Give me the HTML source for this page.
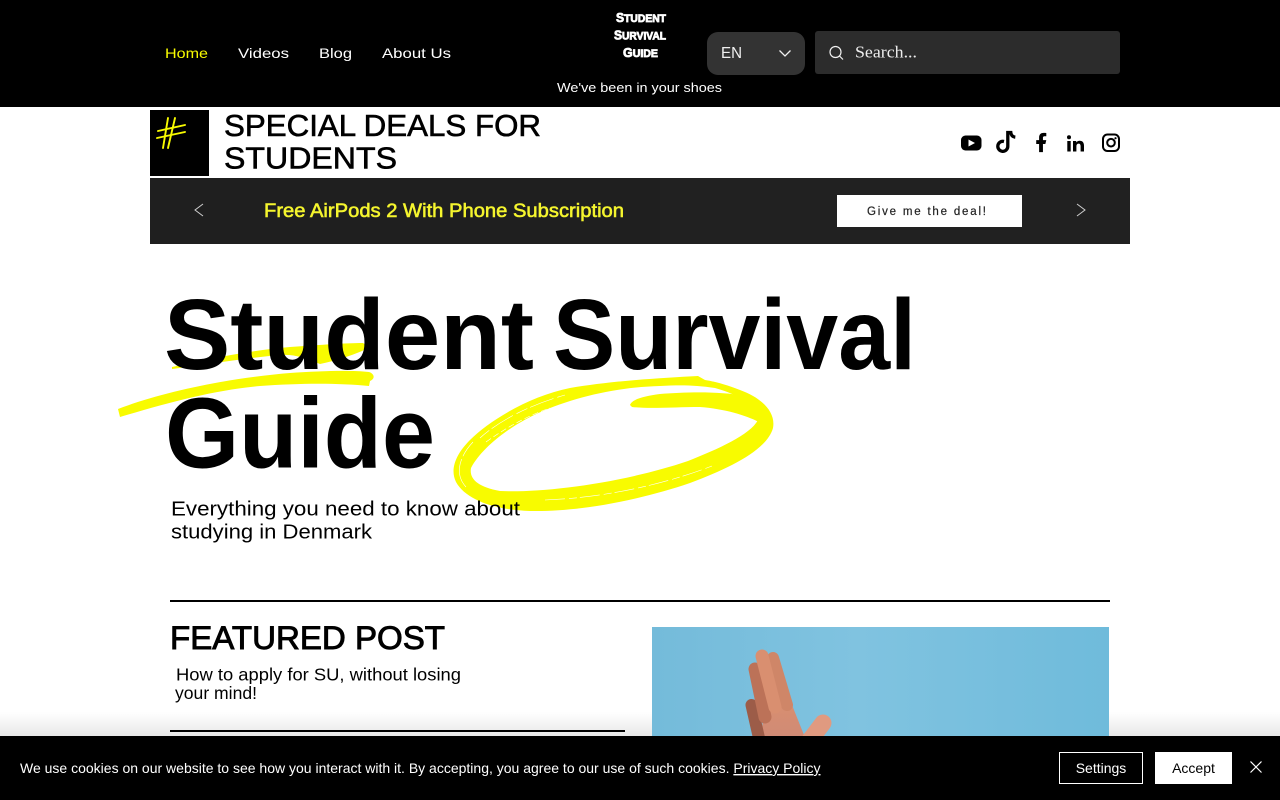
<!DOCTYPE html>
<html lang="en"><head><meta charset="utf-8"><title>Student Survival Guide</title>
<style>
html,body{margin:0;padding:0;width:1280px;height:800px;overflow:hidden;background:#fff}
svg{display:block;position:absolute;left:0;top:0}
text{font-family:"Liberation Sans",sans-serif}
.n{fill:#fff;font-size:14px}
</style></head><body>
<svg width="1280" height="800" viewBox="0 0 1280 800" xmlns="http://www.w3.org/2000/svg">
<defs>
<linearGradient id="sky" x1="0" y1="0" x2="1" y2="0"><stop offset="0" stop-color="#74bbda"/><stop offset=".45" stop-color="#80c3e0"/><stop offset="1" stop-color="#6fbbdb"/></linearGradient>
<linearGradient id="sh" x1="0" y1="0" x2="0" y2="1"><stop offset="0" stop-color="#000" stop-opacity="0"/><stop offset="1" stop-color="#000" stop-opacity=".09"/></linearGradient>
<linearGradient id="skin" x1="0" y1="0" x2="0" y2="1"><stop offset="0" stop-color="#d98f70"/><stop offset="1" stop-color="#cf8a76"/></linearGradient>
</defs>
<rect width="1280" height="800" fill="#fff"/>
<rect x="0" y="712" width="1280" height="24" fill="url(#sh)"/>
<!-- header -->
<rect width="1280" height="107" fill="#000"/>
<text class="n" x="165" y="58" textLength="43" lengthAdjust="spacingAndGlyphs" style="fill:#f8fb00">Home</text>
<text class="n" x="238" y="58" textLength="51" lengthAdjust="spacingAndGlyphs">Videos</text>
<text class="n" x="319" y="58" textLength="33" lengthAdjust="spacingAndGlyphs">Blog</text>
<text class="n" x="382" y="58" textLength="69" lengthAdjust="spacingAndGlyphs">About Us</text>
<g fill="#fff" stroke="#fff" stroke-width=".8" font-weight="700" font-size="11">
<text x="616" y="22" textLength="50" lengthAdjust="spacingAndGlyphs"><tspan font-size="13">S</tspan>TUDENT</text>
<text x="614" y="39.500" textLength="52" lengthAdjust="spacingAndGlyphs"><tspan font-size="13">S</tspan>URVIVAL</text>
<text x="623" y="57" textLength="35" lengthAdjust="spacingAndGlyphs"><tspan font-size="13">G</tspan>UIDE</text>
</g>
<text x="557" y="92" font-size="13" fill="#fff" textLength="165" lengthAdjust="spacingAndGlyphs">We've been in your shoes</text>
<rect x="707" y="32" width="98" height="43" rx="11" fill="#333"/>
<text x="721" y="58" font-size="16" fill="#f0f0f0" textLength="21" lengthAdjust="spacingAndGlyphs">EN</text>
<path d="M779.500 50.500L785 56L790.500 50.500" fill="none" stroke="#f0f0f0" stroke-width="1.300"/>
<rect x="815" y="31" width="305" height="43" rx="3" fill="#2c2c2c"/>
<circle cx="835.500" cy="52" r="5.500" fill="none" stroke="#f0f0f0" stroke-width="1.200"/>
<path d="M839.500 56L843 59.500" stroke="#f0f0f0" stroke-width="1.200"/>
<text x="855" y="57.500" font-size="17" fill="#eee" style='font-family:"Liberation Serif",serif' textLength="62" lengthAdjust="spacingAndGlyphs">Search...</text>

<!-- deals row -->
<rect x="150" y="110" width="59" height="66" fill="#000"/>
<g stroke="#f8fb00" stroke-linecap="round" fill="none" stroke-width="1.900">
<path d="M158 131L185 125"/><path d="M157 138L185 132"/>
<path d="M168 118L163 148"/><path d="M175 118L168 148"/>
</g>
<g font-size="30.500" fill="#000" stroke="#000" stroke-width=".6">
<text x="224" y="136" textLength="317" lengthAdjust="spacingAndGlyphs">SPECIAL DEALS FOR</text>
<text x="224" y="168.500" textLength="173" lengthAdjust="spacingAndGlyphs">STUDENTS</text>
</g>
<!-- socials -->
<rect x="961" y="135.500" width="20.500" height="15" rx="4.500" fill="#000"/><path d="M968.500 139.500V146.500L975 143Z" fill="#fff"/>
<g transform="translate(1.500 0)"><path d="M1002.500 141.500a5 5 0 1 0 3.800 4.900V132.500h3c.3 2.800 1.900 4.400 4.500 4.700" fill="none" stroke="#000" stroke-width="3.300"/></g>
<path transform="translate(1029.500 131) scale(.96)" d="M14 13.500h2.500l1-4H14v-2c0-1.030 0-2 2-2h1.500V2.140c-.326-.043-1.557-.14-2.857-.14C11.928 2 10 3.657 10 6.700v2.800H7v4h3V22h4z" fill="#000"/>
<g fill="#000"><circle cx="1069" cy="137.300" r="2"/><rect x="1067.300" y="141" width="3.400" height="10.500"/><path d="M1073 141h3.200v1.500c.8-1.200 2-1.800 3.500-1.800 3 0 4.300 2 4.300 5v5.800h-3.400v-5.300c0-1.600-.6-2.600-1.900-2.600-1.500 0-2.300 1-2.300 2.700v5.200H1073z"/></g>
<rect x="1103" y="134.500" width="16" height="16.500" rx="4.500" fill="none" stroke="#000" stroke-width="2"/><circle cx="1111" cy="142.700" r="3.800" fill="none" stroke="#000" stroke-width="2"/><circle cx="1115.500" cy="138.200" r="1.100" fill="#000"/>

<!-- banner -->
<rect x="150" y="178" width="980" height="66" fill="#212121"/>
<rect x="150" y="178" width="510" height="66" fill="#1f1f1f"/>
<path d="M203 204L195 210L203 216M1077 204L1085 210L1077 216" fill="none" stroke="#cfcfcf" stroke-width="1"/>
<text x="264" y="217" font-size="19" fill="#f5f52e" stroke="#f5f52e" stroke-width=".55" textLength="360" lengthAdjust="spacingAndGlyphs">Free AirPods 2 With Phone Subscription</text>
<rect x="837" y="195" width="185" height="32" fill="#fff"/>
<text x="867" y="215" font-size="11.500" fill="#222" stroke="#222" stroke-width=".2" textLength="119">Give me the deal!</text>

<!-- yellow strokes -->
<g fill="#f8fb00">
<path d="M118 409C165 391 230 378 290 373C320 371 350 370 369 372C375 374 375 379 370 381L369 386C340 383 300 383 260 386C215 390 170 402 120 417Z"/>
<path d="M172 367C205 360 245 351 290 347C320 345 345 343 363 343C367 345 366 349 362 351C350 356 335 361 320 364C305 358 295 354 280 355C245 358 205 365 172 369Z"/>
<path fill-rule="evenodd" d="M698 376C660 378 610 381 570 388C530 396 490 420 470 440C455 455 450 470 456 482C466 500 495 510 530 511C580 512 640 500 690 483C730 468 767 450 773 428C776 412 762 398 740 390C725 384 712 381 705 380ZM660 386C620 387 578 396 543 411C512 424 482 447 471 468C469 479 478 487 500 491C540 493 620 484 688 461C718 449 750 435 758 420C755 405 740 395 715 388C695 385 680 385 660 386Z"/>
<path d="M630 405C632 399 645 396 660 394C685 392 720 391 745 396C755 402 760 412 759 422C745 415 725 409 700 407C675 407 650 409 632 407Z"/>
</g>
<g fill="none" stroke="#fff" stroke-width=".6">
<path d="M466 487C455 475 458 458 473 442" stroke-dasharray="30 3"/>
<path d="M480 438C500 420 530 405 565 395" stroke-dasharray="12 3 25 4"/>
<path d="M486 442C510 425 530 415 550 408" stroke-dasharray="6 3"/>
<path d="M545 500C600 498 660 486 712 466" stroke-dasharray="20 4 8 3"/>
</g>

<!-- hero -->
<g font-weight="700" font-size="100" fill="#000">
<text x="164" y="369" textLength="370" lengthAdjust="spacingAndGlyphs">Student</text>
<text x="553" y="369" textLength="363" lengthAdjust="spacingAndGlyphs">Survival</text>
<text x="165" y="467.500" textLength="270" lengthAdjust="spacingAndGlyphs">Guide</text>
</g>
<g font-size="20" fill="#000">
<text x="171" y="515.500" textLength="349" lengthAdjust="spacingAndGlyphs">Everything you need to know about</text>
<text x="171" y="538.500" textLength="201" lengthAdjust="spacingAndGlyphs">studying in Denmark</text>
</g>

<!-- featured -->
<rect x="170" y="600" width="940" height="2" fill="#000"/>
<text x="170" y="649" font-size="32" fill="#000" stroke="#000" stroke-width=".9" textLength="275" lengthAdjust="spacingAndGlyphs">FEATURED POST</text>
<g font-size="17.500" fill="#000">
<text x="176" y="680.500" textLength="285" lengthAdjust="spacingAndGlyphs">How to apply for SU, without losing</text>
<text x="175" y="699" textLength="82" lengthAdjust="spacingAndGlyphs">your mind!</text>
</g>
<rect x="170" y="730" width="455" height="2" fill="#000"/>
<rect x="652" y="627" width="457" height="115" fill="url(#sky)"/>
<!-- hand -->
<path d="M762 740L763 706L790 700L806 740Z" fill="url(#skin)"/>
<g stroke-linecap="round" fill="none">
<path d="M751.500 705L759 738" stroke="#9c5c48" stroke-width="12"/>
<path d="M755 669L765 717" stroke="#bc7258" stroke-width="13"/>
<path d="M773 658L787 705" stroke="#cf8668" stroke-width="12"/>
<path d="M762 656L775 707" stroke="#d98f70" stroke-width="13"/>
<path d="M823 723L807 744" stroke="#e09a80" stroke-width="17"/>
</g>

<!-- cookie bar -->
<rect x="0" y="736" width="1280" height="64" fill="#000"/>
<text x="20" y="773" font-size="14" fill="#fff">We use cookies on our website to see how you interact with it. By accepting, you agree to our use of such cookies. <tspan text-decoration="underline">Privacy Policy</tspan></text>
<rect x="1059.500" y="752.500" width="83" height="31" fill="#000" stroke="#fff"/>
<text x="1101" y="773" font-size="14" fill="#fff" text-anchor="middle">Settings</text>
<rect x="1155" y="752" width="77" height="32" fill="#fff"/>
<text x="1193.500" y="773" font-size="14" fill="#000" text-anchor="middle">Accept</text>
<path d="M1250.500 761.500L1261.500 772.500M1261.500 761.500L1250.500 772.500" stroke="#fff" stroke-width="1.200"/>
</svg>
</body></html>
